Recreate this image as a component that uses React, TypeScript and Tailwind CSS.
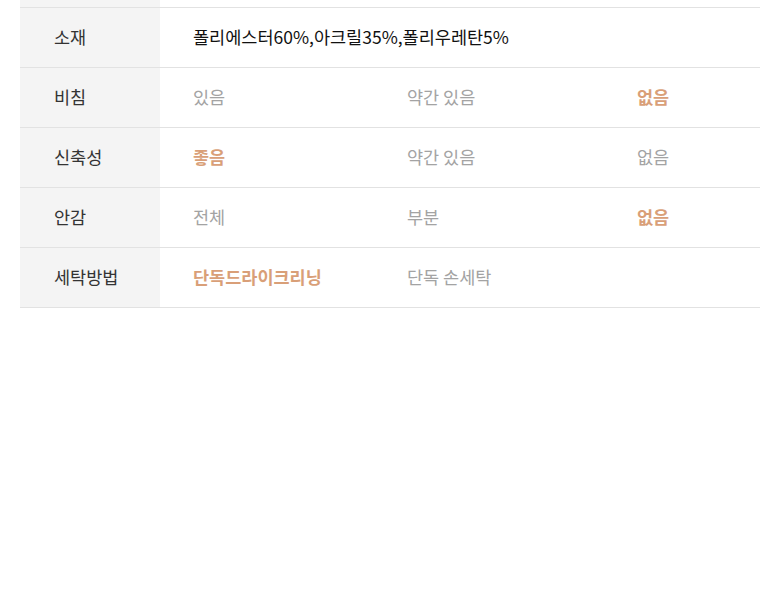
import React from 'react';

type Tone = 'dark' | 'muted' | 'accent';

interface Cell {
  text: string;
  tone: Tone;
}

interface Row {
  label: string;
  cells: Cell[];
  wide?: boolean;
}

const rows: Row[] = [
  { label: '소재', wide: true, cells: [{ text: '폴리에스터60%,아크릴35%,폴리우레탄5%', tone: 'dark' }] },
  {
    label: '비침',
    cells: [
      { text: '있음', tone: 'muted' },
      { text: '약간 있음', tone: 'muted' },
      { text: '없음', tone: 'accent' },
    ],
  },
  {
    label: '신축성',
    cells: [
      { text: '좋음', tone: 'accent' },
      { text: '약간 있음', tone: 'muted' },
      { text: '없음', tone: 'muted' },
    ],
  },
  {
    label: '안감',
    cells: [
      { text: '전체', tone: 'muted' },
      { text: '부분', tone: 'muted' },
      { text: '없음', tone: 'accent' },
    ],
  },
  {
    label: '세탁방법',
    cells: [
      { text: '단독드라이크리닝', tone: 'accent' },
      { text: '단독 손세탁', tone: 'muted' },
    ],
  },
];

const toneClass: Record<Tone, string> = {
  dark: 'text-[#111111]',
  muted: 'text-[#a3a3a3]',
  accent: 'text-[#d99f78] font-bold',
};

export default function App() {
  return (
    <div
      className="w-[780px] h-[608px] bg-white px-[20px]"
      style={{ fontFamily: '"Noto Sans CJK KR", "Noto Sans", sans-serif' }}
    >
      {/* cut-off row above */}
      <div className="flex h-[8px] border-b border-[#e2e2e2]">
        <div className="w-[140px] bg-[#f4f4f4]" />
        <div className="flex-1" />
      </div>

      {rows.map((row) => (
        <div key={row.label} className="flex h-[60px] border-b border-[#e2e2e2] text-[17.5px]">
          <div className="w-[140px] shrink-0 bg-[#f4f4f4] pl-[34px] flex items-center text-[#333333]">
            {row.label}
          </div>
          {row.wide ? (
            <div className="flex-1 pl-[33px] flex items-center">
              <span className={toneClass[row.cells[0].tone]}>{row.cells[0].text}</span>
            </div>
          ) : (
            <div className="flex-1 grid grid-cols-[247px_230px_1fr] items-center">
              {row.cells.map((c, i) => (
                <span key={i} className={`${i === 0 ? 'pl-[33px]' : ''} ${toneClass[c.tone]}`}>
                  {c.text}
                </span>
              ))}
            </div>
          )}
        </div>
      ))}
    </div>
  );
}
